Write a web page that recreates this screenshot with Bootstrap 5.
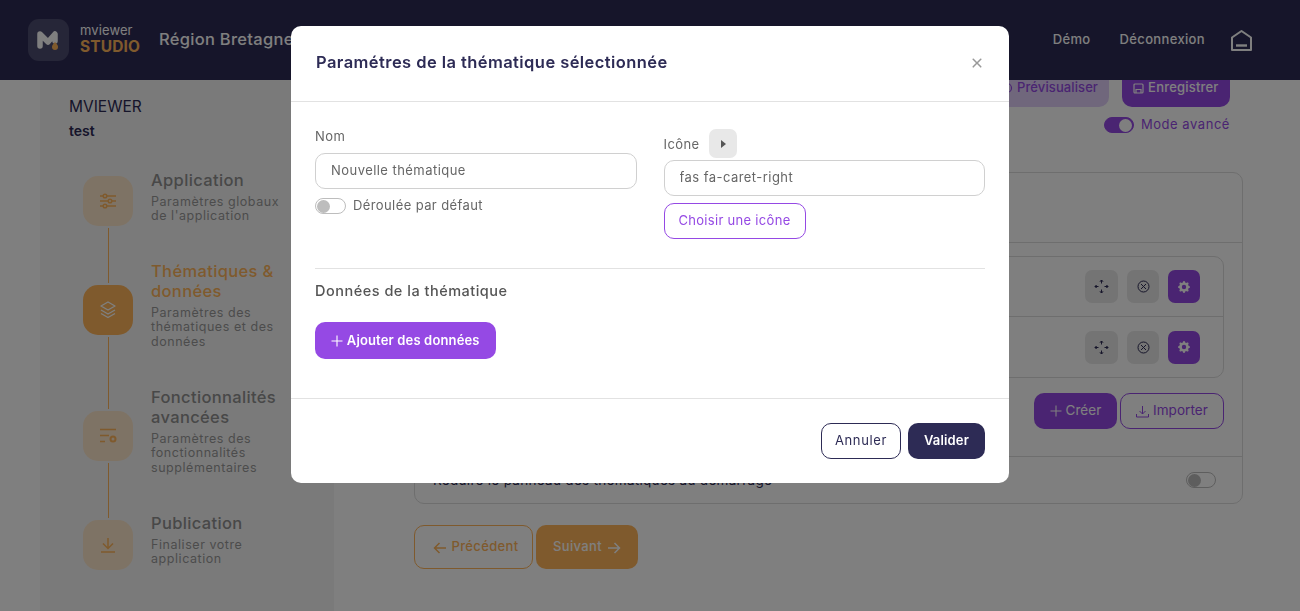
<!DOCTYPE html>
<html lang="fr">
<head>
<meta charset="UTF-8">
<meta name="viewport" content="width=device-width, initial-scale=1.0">
<title>mviewer studio</title>
<link href="https://cdn.jsdelivr.net/npm/bootstrap@5.3.0/dist/css/bootstrap.min.css" rel="stylesheet">
<style>
body { font-family: Inter, "Liberation Sans", sans-serif; height: 611px; overflow: hidden; color: #2d2b55; background: #fff; letter-spacing: .4px; }
/* navbar */
.top-bar { height: 80px; background: #2d2b55; padding: 0 47px 0 28px; position: relative; z-index: 2; }
.logo-box { width: 41px; height: 42px; border-radius: 11px; background: #4d4c70; }
.logo-words { margin: -2px 0 0 11px; }
.logo-mv { font-size: 13px; line-height: 15px; color: #fff; letter-spacing: .1px; }
.logo-st { font-size: 15.5px; line-height: 17px; font-weight: 700; color: #ffb45a; letter-spacing: .1px; }
.region { font-size: 16.5px; font-weight: 500; color: #fff; margin-left: 19px; padding-bottom: 2px; white-space: nowrap; letter-spacing: .3px; }
.top-link { font-size: 13px; font-weight: 500; color: #fff; text-decoration: none; letter-spacing: .35px; }
.link-gap { gap: 29px; }
.home-ico { margin-left: -4px; }
/* sidebar */
.page-main { height: 531px; overflow: hidden; }
.side-col { width: 294px; margin-left: 40px; flex: none; background: #f5f5f5; height: 531px; padding: 17px 0 0 29px; }
.side-app { font-size: 15.5px; line-height: 20px; color: #2d2b55; letter-spacing: 0; }
.side-name { font-size: 14px; font-weight: 600; line-height: 20px; margin-top: 4px; letter-spacing: 0; }
.step-list { margin: 14.5px 0 0 14px; }
.step-icon-col { width: 50px; flex: none; }
.step-line { width: 1px; flex: 1; background: #ffb45a; }
.step-line.off { background: none; }
.step-box { width: 50px; height: 50px; border-radius: 15px; background: #fde6ca; flex: none; margin: 2px 0; }
.step-box.on { background: #ffb45a; }
.step-text { padding: 14px 0 24px 18px; width: 158px; }
.step-title { font-size: 16.5px; line-height: 20px; font-weight: 500; color: #909090; letter-spacing: .35px; }
.step-title.on { color: #ffb45a; }
.step-desc { font-size: 12.5px; line-height: 14.3px; color: #999; letter-spacing: .55px; margin-top: 5px; }
/* contenu droite */
.right-col { flex: 1; padding: 0 57px 0 80px; }
.tool-row { margin-top: -10px; margin-right: 13px; gap: 13px; }
.btn-prev { background: #e0cff8; color: #9549e4; font-size: 13px; font-weight: 500; height: 37px; width: 200px; border-radius: 10px; border: 0; text-align: right; padding: 0 11px 2px; letter-spacing: .1px; }
.btn-save { background: #9549e4; color: #fff; font-size: 13px; font-weight: 500; height: 37px; width: 108px; border-radius: 10px; border: 0; padding: 0 0 2px; letter-spacing: .2px; }
.mode-row { margin: 10px 13px 0 0; gap: 7px; font-size: 13px; color: #9549e4; height: 16px; letter-spacing: .55px; }
.tog { width: 30px; height: 16px; border-radius: 8px; border: 1px solid #bdbdbd; background: #fff; padding: .5px 1px; flex: none; }
.tog i { display: block; width: 13px; height: 13px; border-radius: 50%; background: #bdbdbd; }
.tog.on { background: #9549e4; border-color: #9549e4; justify-content: flex-end; }
.tog.on i { background: #fff; }
.theme-card { margin-top: 39px; height: 332px; border: 1px solid #dcdcdc; border-radius: 10px; }
.theme-head { height: 70px; border-bottom: 1px solid #dcdcdc; }
.theme-list { margin: 13px 18px 0 18px; border: 1px solid #dcdcdc; border-radius: 10px; height: 122px; }
.theme-row { height: 59px; gap: 9px; padding-right: 23px; }
.theme-row + .theme-row { border-top: 1px solid #dcdcdc; height: 61px; }
.sq-btn { width: 32px; height: 33px; border-radius: 7px; background: #e8e8e8; border: 0; padding: 0; }
.sq-btn.wide { width: 33px; }
.sq-btn.on { background: #9549e4; }
.act-row { margin: 15px 18px 0 0; gap: 3px; }
.btn-create, .btn-import { height: 36px; border-radius: 10px; font-size: 13.5px; padding: 0 0 2px; letter-spacing: .05px; }
.btn-create { width: 83px; background: #9549e4; color: #fff; border: 0; }
.btn-import { width: 104px; background: #fff; color: #9549e4; border: 1px solid #9549e4; }
.reduce-row { margin-top: 27px; border-top: 1px solid #dcdcdc; height: 47px; padding: 0 26px 0 18px; font-size: 13.5px; letter-spacing: .3px; }
.step-nav { gap: 3px; margin-top: 21px; }
.btn-back, .btn-next { height: 44px; border-radius: 10px; font-size: 13px; font-weight: 500; padding: 0; letter-spacing: .35px; }
.btn-back { width: 119px; background: #fff; color: #ffb45a; border: 1px solid #ffb45a; padding-left: 4px; }
.btn-back svg { margin-right: 6px; }
.btn-next { width: 102px; background: #ffb45a; color: #fff; border: 0; }
.btn-next svg { margin-left: 6px; }
/* modale */
.modal-dialog.theme-modal { max-width: 718px; width: 718px; margin: 26px auto 0 291px; }
.theme-modal .modal-content { border: 0; border-radius: 10px; height: 457px; }
.theme-modal .modal-header { height: 76px; padding: 0 26px 2px 25px; border-color: #e2e2e2; }
.theme-modal .modal-title { font-size: 16.5px; font-weight: 600; color: #2d2b55; letter-spacing: .43px; }
.theme-modal .btn-close { width: 12px; height: 12px; padding: 0; margin: 0; background-size: 12px; opacity: .4; }
.theme-modal .modal-body { height: 296px; flex: none; padding: 0 24px; }
.theme-modal .modal-footer { height: 85px; padding: 0 24px; border-color: #e2e2e2; gap: 7px; }
.theme-modal .modal-footer > * { margin: 0; }
.col-left { padding-top: 25px; }
.col-right { padding-top: 27px; }
.fld-row { --bs-gutter-x: 27px; height: 166px; }
.fld-label { font-size: 13px; line-height: 18px; color: #666; margin: 0; }
.fld-input { height: 36px; border-radius: 10px; border-color: #d0d0d0; font-size: 13px; color: #666; padding: 0 15px 2px; margin-top: 8px; letter-spacing: .45px; }
.col-right .fld-input { margin-top: 2px; }
.sw-row { gap: 7px; margin-top: 9px; font-size: 13px; color: #666; }
.sw-row span:last-child { line-height: 14px; margin-top: -3px; }
.sw-row .tog { width: 31px; }
.preview-sq { width: 28px; height: 29px; border-radius: 7px; background: #e8e8e8; margin-left: 10px; }
.btn-icon-pick { width: 142px; height: 36px; border: 1px solid #9549e4; border-radius: 10px; background: #fff; color: #9549e4; font-size: 13px; padding: 0; margin-top: 7px; letter-spacing: .3px; }
.data-title { border-top: 1px solid #e2e2e2; padding-top: 12px; font-size: 14.5px; font-weight: 500; line-height: 20px; color: #555; letter-spacing: .5px; }
.btn-add-data { width: 181px; height: 37px; background: #9549e4; color: #fff; border: 0; border-radius: 10px; font-size: 13px; font-weight: 600; padding: 0; margin-top: 21px; letter-spacing: .15px; }
.btn-cancel { width: 80px; height: 36px; border: 1px solid #2d2b55; border-radius: 10px; background: #fff; color: #2d2b55; font-size: 13px; padding: 0; letter-spacing: .65px; }
.btn-ok { width: 77px; height: 36px; border: 0; border-radius: 10px; background: #2d2b55; color: #fff; font-size: 13px; font-weight: 600; padding: 0; letter-spacing: .15px; }
</style>
</head>
<body>

<!-- Barre du haut -->
<nav class="top-bar d-flex align-items-center">
    <div class="logo-box d-flex align-items-center justify-content-center">
        <svg width="24" height="20" viewBox="0 0 24 20"><path d="M3 16V4l8 8 7-8v7" fill="none" stroke="#fff" stroke-width="5.5" stroke-linecap="round" stroke-linejoin="round"/><path d="M18 12c2 2 3 3.500 3 5a3 3 0 0 1-6 0c0-1.500 1-3 3-5z" fill="#ffb45a"/></svg>
    </div>
    <div class="logo-words">
        <div class="logo-mv">mviewer</div>
        <div class="logo-st">STUDIO</div>
    </div>
    <div class="region">Région Bretagne</div>
    <div class="ms-auto d-flex align-items-center link-gap">
        <a href="#" class="top-link">Démo</a>
        <a href="#" class="top-link">Déconnexion</a>
        <svg class="home-ico" width="23" height="23" viewBox="0 0 23 23" fill="none" stroke="#fff" stroke-width="2"><path d="M2 21V8.500L11.500 2 21 8.500V21z" stroke-linejoin="round"/><path d="M6 16.500h11" stroke-width="2.400"/></svg>
    </div>
</nav>

<div class="page-main d-flex">
    <!-- Etapes -->
    <aside class="side-col">
        <div class="side-app">MVIEWER</div>
        <div class="side-name">test</div>
        <div class="step-list">
            <div class="d-flex">
                <div class="step-icon-col d-flex flex-column align-items-center">
                    <span class="step-line off"></span>
                    <span class="step-box d-flex align-items-center justify-content-center">
                        <svg width="18" height="18" viewBox="0 0 18 18" fill="none" stroke="#ffb45a" stroke-width="1.500"><path d="M1 4h16M1 9h16M1 14h16"/><circle cx="6" cy="4" r="1.800" fill="#fde6ca"/><circle cx="11" cy="9" r="1.800" fill="#fde6ca"/><circle cx="6" cy="14" r="1.800" fill="#fde6ca"/></svg>
                    </span>
                    <span class="step-line"></span>
                </div>
                <div class="step-text">
                    <div class="step-title">Application</div>
                    <div class="step-desc">Paramètres globaux de l'application</div>
                </div>
            </div>
            <div class="d-flex">
                <div class="step-icon-col d-flex flex-column align-items-center">
                    <span class="step-line"></span>
                    <span class="step-box on d-flex align-items-center justify-content-center">
                        <svg width="18" height="18" viewBox="0 0 18 18" fill="none" stroke="#fff" stroke-width="1.400" stroke-linejoin="round"><path d="M9 1l7 4-7 4-7-4z"/><path d="M2 9l7 4 7-4M2 12.500l7 4 7-4"/></svg>
                    </span>
                    <span class="step-line"></span>
                </div>
                <div class="step-text">
                    <div class="step-title on">Thématiques &amp; données</div>
                    <div class="step-desc">Paramètres des thématiques et des données</div>
                </div>
            </div>
            <div class="d-flex">
                <div class="step-icon-col d-flex flex-column align-items-center">
                    <span class="step-line"></span>
                    <span class="step-box d-flex align-items-center justify-content-center">
                        <svg width="18" height="16" viewBox="0 0 18 16" fill="none" stroke="#ffb45a" stroke-width="1.500"><path d="M1 1.500h16M1 7.500h9M1 13.500h5"/><circle cx="14" cy="11" r="2.500" stroke-width="2"/></svg>
                    </span>
                    <span class="step-line"></span>
                </div>
                <div class="step-text">
                    <div class="step-title">Fonctionnalités avancées</div>
                    <div class="step-desc">Paramètres des fonctionnalités supplémentaires</div>
                </div>
            </div>
            <div class="d-flex">
                <div class="step-icon-col d-flex flex-column align-items-center">
                    <span class="step-line"></span>
                    <span class="step-box d-flex align-items-center justify-content-center">
                        <svg width="16" height="16" viewBox="0 0 16 16" fill="none" stroke="#ffb45a" stroke-width="1.500"><path d="M8 1v10M3 6.500l5 5 5-5M1 15h14"/></svg>
                    </span>
                    <span class="step-line off"></span>
                </div>
                <div class="step-text">
                    <div class="step-title">Publication</div>
                    <div class="step-desc">Finaliser votre application</div>
                </div>
            </div>
        </div>
    </aside>

    <!-- Contenu -->
    <main class="right-col">
        <div class="tool-row d-flex justify-content-end">
            <button class="btn-prev">
                <svg width="12" height="12" viewBox="0 0 12 12" fill="none" stroke="#9549e4" stroke-width="1.200"><circle cx="6" cy="6" r="4.500"/></svg>
                Prévisualiser</button>
            <button class="btn-save">
                <svg width="11" height="11" viewBox="0 0 11 11" fill="none" stroke="#fff" stroke-width="1.200"><rect x="1" y="1" width="9" height="9" rx="1"/><path d="M3 10V6.500h5V10"/></svg>
                Enregistrer</button>
        </div>
        <div class="mode-row d-flex justify-content-end align-items-center">
            <span class="tog on d-flex"><i></i></span>
            <span>Mode avancé</span>
        </div>
        <div class="theme-card">
            <div class="theme-head"></div>
            <div class="theme-list">
                <div class="theme-row d-flex align-items-center justify-content-end">
                    <button class="sq-btn wide d-flex align-items-center justify-content-center"><svg width="15" height="15" viewBox="0 0 15 15" fill="none" stroke="#2d2b55" stroke-width="1"><path d="M7.500 1v3.500M7.500 10.500V14M1 7.500h3.500M10.500 7.500H14"/><path d="M6 2.500l1.500-1.500L9 2.500M6 12.500L7.500 14 9 12.500M2.500 6L1 7.500 2.500 9M12.500 6L14 7.500 12.500 9" fill="#2d2b55"/></svg></button>
                    <button class="sq-btn d-flex align-items-center justify-content-center"><svg width="13" height="13" viewBox="0 0 13 13" fill="none" stroke="#2d2b55" stroke-width="1"><circle cx="6.500" cy="6.500" r="5.500"/><path d="M4 4l5 5M9 4l-5 5"/></svg></button>
                    <button class="sq-btn on d-flex align-items-center justify-content-center"><svg width="12" height="12" viewBox="0 0 16 16" fill="#fff"><path d="M9.405 1.050c-.413-1.400-2.397-1.400-2.810 0l-.1.340a1.464 1.464 0 0 1-2.105.872l-.31-.17c-1.283-.698-2.686.705-1.987 1.987l.169.311c.446.820.023 1.841-.872 2.105l-.34.1c-1.400.413-1.400 2.397 0 2.810l.34.1a1.464 1.464 0 0 1 .872 2.105l-.17.31c-.698 1.283.705 2.686 1.987 1.987l.311-.169a1.464 1.464 0 0 1 2.105.872l.1.340c.413 1.400 2.397 1.400 2.810 0l.1-.34a1.464 1.464 0 0 1 2.105-.872l.31.17c1.283.698 2.686-.705 1.987-1.987l-.169-.311a1.464 1.464 0 0 1 .872-2.105l.34-.1c1.400-.413 1.400-2.397 0-2.810l-.34-.1a1.464 1.464 0 0 1-.872-2.105l.17-.31c.698-1.283-.705-2.686-1.987-1.987l-.311.169a1.464 1.464 0 0 1-2.105-.872l-.1-.34zM8 10.930a2.929 2.929 0 1 1 0-5.860 2.929 2.929 0 0 1 0 5.858z"/></svg></button>
                </div>
                <div class="theme-row d-flex align-items-center justify-content-end">
                    <button class="sq-btn wide d-flex align-items-center justify-content-center"><svg width="15" height="15" viewBox="0 0 15 15" fill="none" stroke="#2d2b55" stroke-width="1"><path d="M7.500 1v3.500M7.500 10.500V14M1 7.500h3.500M10.500 7.500H14"/><path d="M6 2.500l1.500-1.500L9 2.500M6 12.500L7.500 14 9 12.500M2.500 6L1 7.500 2.500 9M12.500 6L14 7.500 12.500 9" fill="#2d2b55"/></svg></button>
                    <button class="sq-btn d-flex align-items-center justify-content-center"><svg width="13" height="13" viewBox="0 0 13 13" fill="none" stroke="#2d2b55" stroke-width="1"><circle cx="6.500" cy="6.500" r="5.500"/><path d="M4 4l5 5M9 4l-5 5"/></svg></button>
                    <button class="sq-btn on d-flex align-items-center justify-content-center"><svg width="12" height="12" viewBox="0 0 16 16" fill="#fff"><path d="M9.405 1.050c-.413-1.400-2.397-1.400-2.810 0l-.1.340a1.464 1.464 0 0 1-2.105.872l-.31-.17c-1.283-.698-2.686.705-1.987 1.987l.169.311c.446.820.023 1.841-.872 2.105l-.34.1c-1.400.413-1.400 2.397 0 2.810l.34.1a1.464 1.464 0 0 1 .872 2.105l-.17.31c-.698 1.283.705 2.686 1.987 1.987l.311-.169a1.464 1.464 0 0 1 2.105.872l.1.340c.413 1.400 2.397 1.400 2.810 0l.1-.34a1.464 1.464 0 0 1 2.105-.872l.31.17c1.283.698 2.686-.705 1.987-1.987l-.169-.311a1.464 1.464 0 0 1 .872-2.105l.34-.1c1.400-.413 1.400-2.397 0-2.810l-.34-.1a1.464 1.464 0 0 1-.872-2.105l.17-.31c.698-1.283-.705-2.686-1.987-1.987l-.311.169a1.464 1.464 0 0 1-2.105-.872l-.1-.34zM8 10.930a2.929 2.929 0 1 1 0-5.860 2.929 2.929 0 0 1 0 5.858z"/></svg></button>
                </div>
            </div>
            <div class="act-row d-flex justify-content-end">
                <button class="btn-create"><svg width="12" height="12" viewBox="0 0 12 12" fill="none" stroke="#fff" stroke-width="1.100"><path d="M6 .5v11M.5 6h11"/></svg> Créer</button>
                <button class="btn-import"><svg width="13" height="13" viewBox="0 0 13 13" fill="none" stroke="#9549e4" stroke-width="1"><path d="M6.500 1v8M3.500 6l3 3 3-3M.5 9v3h12V9"/></svg> Importer</button>
            </div>
            <div class="reduce-row d-flex align-items-center justify-content-between">
                <span>Réduire le panneau des thématiques au démarrage</span>
                <span class="tog d-flex"><i></i></span>
            </div>
        </div>
        <div class="step-nav d-flex">
            <button class="btn-back"><svg width="13" height="12" viewBox="0 0 13 12" fill="none" stroke="#ffb45a" stroke-width="1.500"><path d="M13 6H1.500M6.500 1l-5 5 5 5"/></svg>Précédent</button>
            <button class="btn-next">Suivant<svg width="13" height="12" viewBox="0 0 13 12" fill="none" stroke="#fff" stroke-width="1.500"><path d="M0 6h11.500M6.500 1l5 5-5 5"/></svg></button>
        </div>
    </main>
</div>

<div class="modal-backdrop fade show"></div>

<!-- Modale -->
<div class="modal fade show d-block" tabindex="-1">
    <div class="modal-dialog theme-modal">
        <div class="modal-content">
            <div class="modal-header">
                <h5 class="modal-title">Paramétres de la thématique sélectionnée</h5>
                <button type="button" class="btn-close" aria-label="Close"></button>
            </div>
            <div class="modal-body">
                <div class="row fld-row">
                    <div class="col-6 col-left">
                        <label class="fld-label d-block">Nom</label>
                        <input type="text" class="form-control fld-input" value="Nouvelle thématique">
                        <div class="sw-row d-flex align-items-center">
                            <span class="tog d-flex"><i></i></span>
                            <span>Déroulée par défaut</span>
                        </div>
                    </div>
                    <div class="col-6 col-right">
                        <div class="d-flex align-items-center">
                            <label class="fld-label">Icône</label>
                            <span class="preview-sq d-flex align-items-center justify-content-center">
                                <svg width="5" height="8" viewBox="0 0 5 8"><path d="M0 0l5 4-5 4z" fill="#555"/></svg>
                            </span>
                        </div>
                        <input type="text" class="form-control fld-input" value="fas fa-caret-right">
                        <button class="btn-icon-pick">Choisir une icône</button>
                    </div>
                </div>
                <div class="data-title">Données de la thématique</div>
                <button class="btn-add-data"><svg width="12" height="12" viewBox="0 0 12 12" fill="none" stroke="#fff" stroke-width="1.100"><path d="M6 .5v11M.5 6h11"/></svg> Ajouter des données</button>
            </div>
            <div class="modal-footer">
                <button class="btn-cancel">Annuler</button>
                <button class="btn-ok">Valider</button>
            </div>
        </div>
    </div>
</div>

<script src="https://cdn.jsdelivr.net/npm/bootstrap@5.3.0/dist/js/bootstrap.bundle.min.js"></script>
</body>
</html>
